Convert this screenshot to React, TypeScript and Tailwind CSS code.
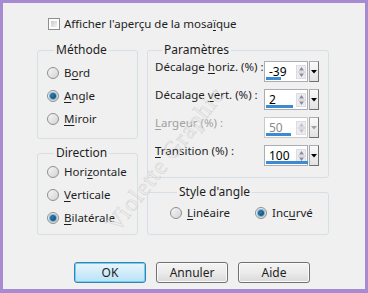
import React from "react";

const font = { fontFamily: '"Noto Sans", "Open Sans", sans-serif' };

function Mn({ children }: { children: React.ReactNode }) {
  return <span className="underline underline-offset-[2px]">{children}</span>;
}

function Radio({ checked, children }: { checked?: boolean; children: React.ReactNode }) {
  return (
    <div className="flex items-center h-[16px] gap-[5px] whitespace-nowrap">
      <div className="w-[12px] h-[12px] rounded-full border border-[#8e8f8f] bg-gradient-to-br from-[#f6f6f6] to-[#d4d4d4] flex items-center justify-center">
        {checked && (
          <div className="w-[6px] h-[6px] rounded-full bg-[radial-gradient(circle_at_40%_40%,#2a7fb5,#0d3b5c)] shadow-[0_0_0_1px_#7bb5dc]" />
        )}
      </div>
      <span>{children}</span>
    </div>
  );
}

function Group({ title, className, children }: { title: string; className: string; children: React.ReactNode }) {
  return (
    <fieldset className={"border border-[#d5dfe5] rounded-[3px] " + className}>
      <legend className="ml-[7px] px-[2px] leading-[16px] text-[12px]">{title}</legend>
      {children}
    </fieldset>
  );
}

function Spin({ value, bar, disabled }: { value: string; bar: number; disabled?: boolean }) {
  return (
    <div className="flex h-[21px]">
      <div className={"relative flex items-center w-[44px] bg-white border " + (disabled ? "border-[#c9c9c9]" : "border-[#abadb3]")}>
        <span className={"pl-[4px] flex-1 text-[12px] " + (disabled ? "text-[#8a8a8a]" : "text-black")}>{value}</span>
        <div className="flex flex-col items-center justify-center w-[10px] h-[14px] mr-[1px] bg-[#ececf0] border border-[#dcdce2]">
          <svg width="7" height="12" viewBox="0 0 7 12">
            <path d="M3.5 1 L6 4.5 L1 4.5 Z" fill={disabled ? "#c0c0c8" : "#8c8ca0"} />
            <line x1="0" y1="6" x2="7" y2="6" stroke="#c8c8d0" />
            <path d="M1 7.5 L6 7.5 L3.5 11 Z" fill={disabled ? "#c0c0c8" : "#8c8ca0"} />
          </svg>
        </div>
        <div className="absolute left-[1px] bottom-[1px] h-[3px] bg-[#3b8ad2]" style={{ width: bar }} />
      </div>
      <div className="w-[10px] ml-[1px] bg-gradient-to-b from-[#fafafa] to-[#e2e2e2] border border-[#acacac] border-r-[#707070] border-b-[#707070] flex items-center justify-center">
        <svg width="6" height="4" viewBox="0 0 6 4">
          <path d="M0 0 L6 0 L3 3.5 Z" fill={disabled ? "#a0a0a0" : "#000"} />
        </svg>
      </div>
    </div>
  );
}

function Row({ label, children, disabled }: { label: React.ReactNode; children: React.ReactNode; disabled?: boolean }) {
  return (
    <div className="flex items-start h-[21px]">
      <span className={"flex-1 whitespace-nowrap leading-[16px] -mt-[2px] " + (disabled ? "text-[#a0a0a0]" : "")}>{label}</span>
      {children}
    </div>
  );
}

function Button({ children, primary }: { children: React.ReactNode; primary?: boolean }) {
  return (
    <div
      className={
        "w-[72px] h-[21px] rounded-[3px] border flex items-center justify-center " +
        (primary
          ? "border-[#3c7fb1] shadow-[inset_0_0_0_1px_#6fd0f5] bg-gradient-to-b from-[#e8f6fd] to-[#b9e2f7]"
          : "border-[#707070] shadow-[inset_0_0_0_1px_#fbfbfb] bg-gradient-to-b from-[#f4f4f4] via-[#ebebeb] to-[#d9d9d9]")
      }
    >
      {children}
    </div>
  );
}

export default function App() {
  return (
    <div className="w-[368px] h-[293px] bg-[#a68bd2] pt-[3px] pl-[3px] pr-[3px] pb-[4px]" style={font}>
      <div className="relative w-[362px] h-[286px] bg-[#f0f0f0] text-[11.5px] text-[#1e1e1e] overflow-hidden">
        <div className="flex flex-col pl-[34px] pt-[15px]">
          <div className="flex items-center gap-[4px] ml-[11px] h-[12px]">
            <div className="w-[12px] h-[12px] border border-[#8f8f8f] bg-white p-[2px]">
              <div className="w-full h-full bg-gradient-to-br from-[#cbcbcb] to-[#f4f4f4]" />
            </div>
            <span className="leading-[16px] whitespace-nowrap">
              Afficher l'aperçu de la mosa<Mn>ï</Mn>que
            </span>
          </div>

          <div className="flex gap-[9px] mt-[12px]">
            <div className="flex flex-col gap-[6px] w-[101px]">
              <Group title="Méthode" className="h-[97px] pl-[9px] pt-[7px]">
                <div className="flex flex-col gap-[7px]">
                  <Radio>B<Mn>o</Mn>rd</Radio>
                  <Radio checked><Mn>A</Mn>ngle</Radio>
                  <Radio><Mn>M</Mn>iroir</Radio>
                </div>
              </Group>
              <Group title="Direction" className="h-[90px] pl-[9px] pt-[3px]">
                <div className="flex flex-col gap-[7px]">
                  <Radio>Hori<Mn>z</Mn>ontale</Radio>
                  <Radio><Mn>V</Mn>erticale</Radio>
                  <Radio checked><Mn>B</Mn>ilatérale</Radio>
                </div>
              </Group>
            </div>

            <div className="flex flex-col gap-[6px] w-[182px]">
              <Group title="Paramètres" className="h-[136px] pl-[7px] pr-[9px] pt-[3px]">
                <div className="flex flex-col gap-[7px]">
                  <Row label={<>Décalage <Mn>h</Mn>oriz. (%) :</>}>
                    <Spin value="-39" bar={15} />
                  </Row>
                  <Row label={<>Décalage <Mn>v</Mn>ert. (%) :</>}>
                    <Spin value="2" bar={27} />
                  </Row>
                  <Row disabled label={<><Mn>L</Mn>argeur (%) :</>}>
                    <Spin value="50" bar={25} disabled />
                  </Row>
                  <Row label={<><Mn>T</Mn>ransition (%) :</>}>
                    <Spin value="100" bar={42} />
                  </Row>
                </div>
              </Group>
              <Group title="Style d'angle" className="h-[51px] pl-[22px] pt-[5px]">
                <div className="flex gap-[25px]">
                  <Radio><Mn>L</Mn>inéaire</Radio>
                  <Radio checked>Inc<Mn>u</Mn>rvé</Radio>
                </div>
              </Group>
            </div>
          </div>

          <div className="flex gap-[10px] ml-[37px] mt-[27px] text-[12px]">
            <Button primary>OK</Button>
            <Button>Annuler</Button>
            <Button>Aide</Button>
          </div>
        </div>

        {/* faint watermark across the dialog */}
        <span
          className="absolute left-[62px] top-[142px] w-[200px] text-center -rotate-[52deg] text-[24px] leading-[28px] text-transparent [-webkit-text-stroke:0.6px_#d6d6d6] tracking-[1px] pointer-events-none select-none"
          style={{ fontFamily: '"Liberation Serif", serif' }}
        >
          Violette Graphic
        </span>
      </div>
    </div>
  );
}
